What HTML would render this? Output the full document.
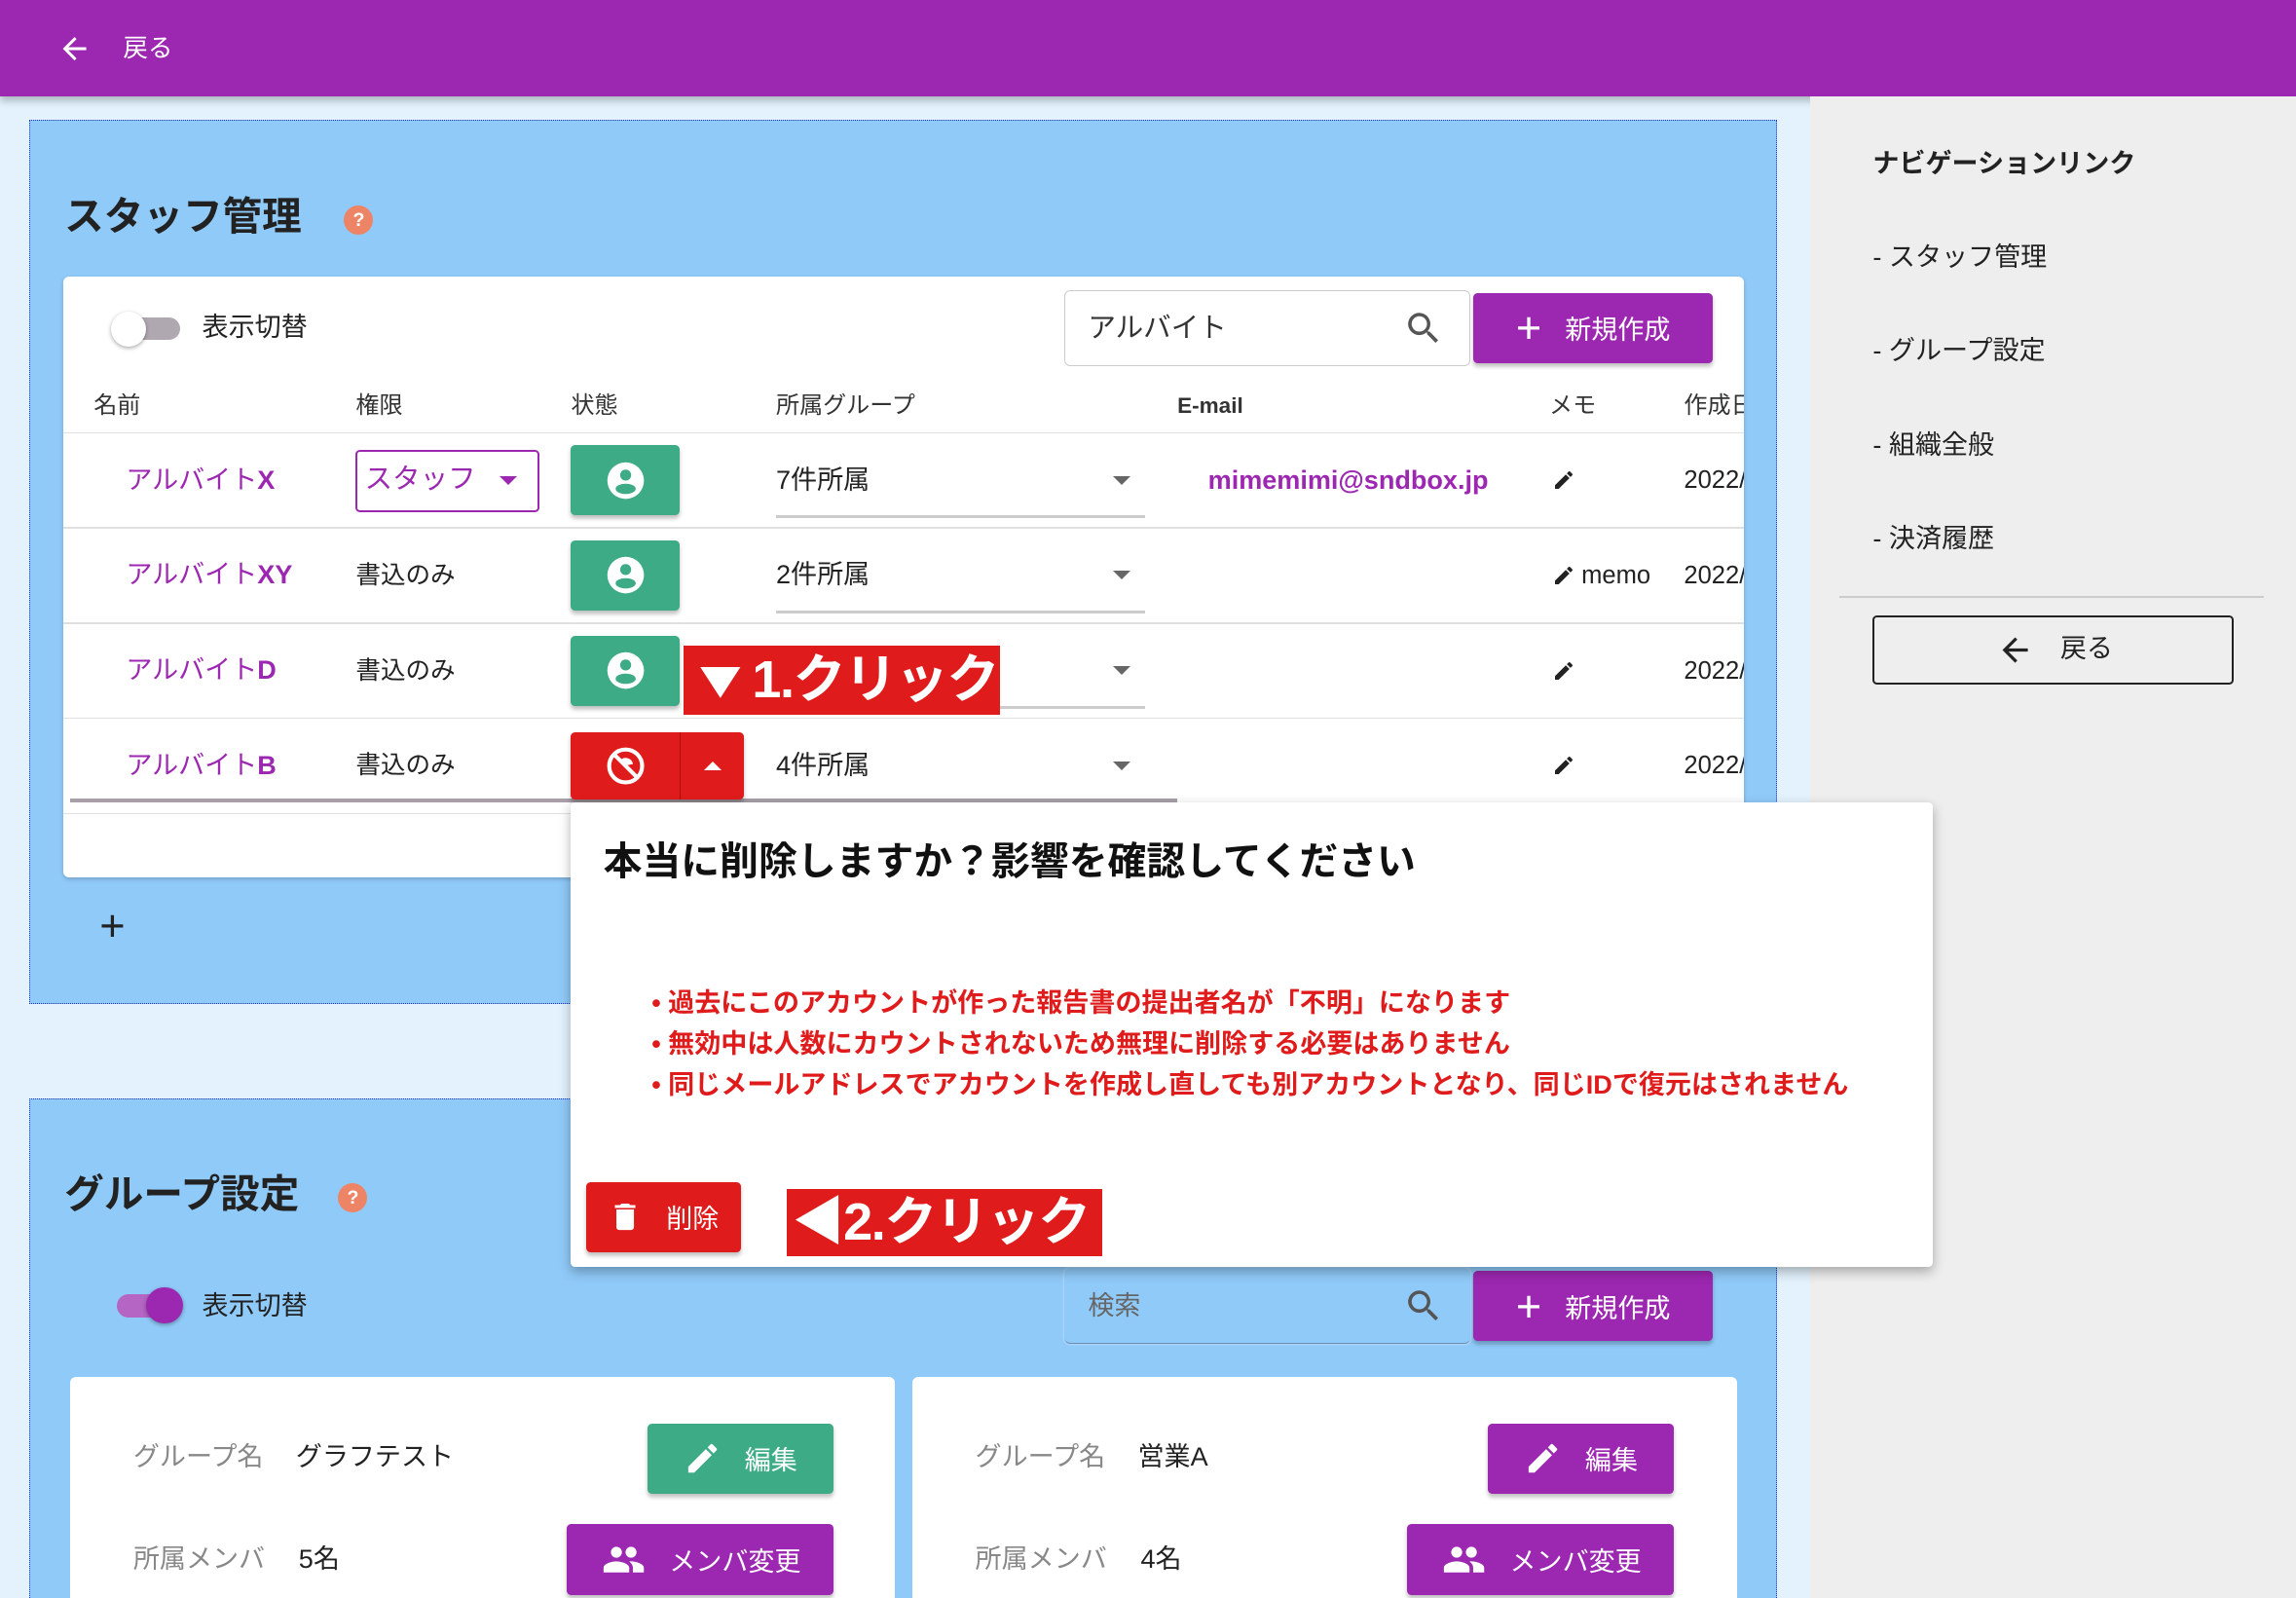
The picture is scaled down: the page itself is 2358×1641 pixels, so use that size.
<!DOCTYPE html>
<html><head><meta charset="utf-8">
<style>
html,body{margin:0;padding:0;width:2358px;height:1640px;overflow:hidden;background:#e3f2fd}
#w{position:absolute;left:0;top:0;width:1568px;height:1091px;zoom:1.50383;font-family:"Liberation Sans","Noto Sans CJK JP",sans-serif;color:#222;overflow:hidden}
.a{position:absolute}
.t{position:absolute;white-space:nowrap;line-height:1}
.btn{position:absolute;border-radius:3px;box-shadow:0 2px 3px rgba(0,0,0,.25);color:#fff;display:flex;align-items:center;justify-content:center}
.pur{background:#9c27b0}.grn{background:#3dab85}.red{background:#e01b1b}
.row{position:absolute;left:0;width:1148px;height:1px;background:#e0e0e0}
.name{color:#9c27b0;font-size:18px}
.name b{font-weight:bold}
.arrow{position:absolute;width:0;height:0;border-left:6px solid transparent;border-right:6px solid transparent;border-top:6px solid #666}
</style></head><body><div id="w">
<!-- header -->
<div class="a" style="left:0;top:0;width:1568px;height:66px;background:#9c27b0;box-shadow:0 3px 5px rgba(0,0,0,.25)"></div>
<svg class="a" style="left:38px;top:21px" width="26" height="24" viewBox="0 0 24 24"><path d="M20 11H7.8l5.6-5.6L12 4l-8 8 8 8 1.4-1.4L7.8 13H20z" fill="#fff"/></svg>
<div class="t" style="left:84px;top:25px;color:#fff;font-size:17px">戻る</div>
<!-- sidebar -->
<div class="a" style="left:1236px;top:66px;width:332px;height:1030px;background:#eeeeee"></div>
<div class="t" style="left:1279px;top:103px;font-size:18px;font-weight:bold">ナビゲーションリンク</div>
<div class="t" style="left:1279px;top:167px;font-size:18px">- スタッフ管理</div>
<div class="t" style="left:1279px;top:231px;font-size:18px">- グループ設定</div>
<div class="t" style="left:1279px;top:295px;font-size:18px">- 組織全般</div>
<div class="t" style="left:1279px;top:359px;font-size:18px">- 決済履歴</div>
<div class="a" style="left:1256px;top:407px;width:290px;height:1px;background:#ccc"></div>
<div class="a" style="left:1279px;top:420px;width:244px;height:45px;border:1.5px solid #222;border-radius:3px"></div>
<svg class="a" style="left:1363px;top:431px" width="26" height="26" viewBox="0 0 24 24"><path d="M20 11H7.8l5.6-5.6L12 4l-8 8 8 8 1.4-1.4L7.8 13H20z" fill="#222"/></svg>
<div class="t" style="left:1407px;top:434px;font-size:18px">戻る</div>

<!-- section 1 -->
<div class="a" style="left:20px;top:82px;width:1192px;height:602px;background:#90caf9;border:1px dotted #2233cc"></div>
<div class="t" style="left:44px;top:134px;font-size:27px;font-weight:bold">スタッフ管理</div>
<div class="a" style="left:235px;top:140px;width:20px;height:20px;border-radius:50%;background:#ee8466;color:#fff;font-size:13px;font-weight:bold;text-align:center;line-height:20px">?</div>
<div class="a" style="left:43px;top:189px;width:1148px;height:410px;background:#fff;border-radius:4px;box-shadow:0 1px 3px rgba(0,0,0,.2);overflow:hidden">
 <div class="a" style="left:40px;top:28px;width:40px;height:15px;border-radius:8px;background:#b0a8b0"></div>
 <div class="a" style="left:33px;top:24px;width:24px;height:24px;border-radius:50%;background:#fff;box-shadow:0 1px 3px rgba(0,0,0,.35)"></div>
 <div class="t" style="left:95px;top:26px;font-size:18px">表示切替</div>
 <div class="a" style="left:684px;top:9px;width:276px;height:51px;border:1px solid #ccc;border-radius:4px"></div>
 <div class="t" style="left:700px;top:26px;font-size:19px;color:#333">アルバイト</div>
 <svg class="a" style="left:915px;top:21px" width="28" height="28" viewBox="0 0 24 24"><path d="M15.5 14h-.8l-.3-.3A6.5 6.5 0 1 0 9.5 16a6.5 6.5 0 0 0 4.2-1.6l.3.3v.8l5 5 1.5-1.5-5-5zm-6 0a4.5 4.5 0 1 1 0-9 4.5 4.5 0 0 1 0 9z" fill="#555"/></svg>
 <div class="btn pur" style="left:963px;top:11px;width:164px;height:48px;font-size:18px"><span style="font-size:30px;font-weight:300;margin-right:16px;line-height:1">+</span>新規作成</div>
 <div class="t" style="left:21px;top:80px;font-size:16px;color:#333">名前</div>
 <div class="t" style="left:200px;top:80px;font-size:16px;color:#333">権限</div>
 <div class="t" style="left:347px;top:80px;font-size:16px;color:#333">状態</div>
 <div class="t" style="left:487px;top:80px;font-size:16px;color:#333">所属グループ</div>
 <div class="t" style="left:761px;top:81px;font-size:15px;color:#333;font-weight:bold">E-mail</div>
 <div class="t" style="left:1015px;top:80px;font-size:16px;color:#333">メモ</div>
 <div class="t" style="left:1107px;top:80px;font-size:16px;color:#333">作成日</div>
 <div class="row" style="top:106px"></div>
 <div class="row" style="top:171px"></div>
 <div class="row" style="top:236px"></div>
 <div class="row" style="top:301px"></div>
 <div class="row" style="top:366px"></div>
 <div class="t name" style="left:43px;top:130px">アルバイト<b>X</b></div>
 <div class="a" style="left:200px;top:118px;width:123px;height:40px;border:1.5px solid #9c27b0;border-radius:3px"></div>
 <div class="t" style="left:206px;top:129px;font-size:19px;color:#9c27b0">スタッフ</div>
 <div class="arrow" style="left:298px;top:136px;border-top-color:#9c27b0"></div>
 <div class="t" style="left:487px;top:130px;font-size:18px">7件所属</div>
 <div class="arrow" style="left:717px;top:136px"></div>
 <div class="a" style="left:487px;top:163px;width:252px;height:2px;background:#ccc"></div>
 <div class="t" style="left:782px;top:130px;font-size:18px;color:#9c27b0;font-weight:bold">mimemimi@sndbox.jp</div>
 <div class="t" style="left:1107px;top:131px;font-size:17px">2022/</div>
 <div class="t name" style="left:43px;top:195px">アルバイト<b>XY</b></div>
 <div class="t" style="left:200px;top:196px;font-size:17px">書込のみ</div>
 <div class="t" style="left:487px;top:195px;font-size:18px">2件所属</div>
 <div class="arrow" style="left:717px;top:201px"></div>
 <div class="a" style="left:487px;top:228px;width:252px;height:2px;background:#ccc"></div>
 <div class="t" style="left:1037px;top:196px;font-size:17px">memo</div>
 <div class="t" style="left:1107px;top:196px;font-size:17px">2022/</div>
 <div class="t name" style="left:43px;top:260px">アルバイト<b>D</b></div>
 <div class="t" style="left:200px;top:261px;font-size:17px">書込のみ</div>
 <div class="arrow" style="left:717px;top:266px"></div>
 <div class="a" style="left:487px;top:293px;width:252px;height:2px;background:#ccc"></div>
 <div class="t" style="left:1107px;top:261px;font-size:17px">2022/</div>
 <div class="t name" style="left:43px;top:325px">アルバイト<b>B</b></div>
 <div class="t" style="left:200px;top:326px;font-size:17px">書込のみ</div>
 <div class="t" style="left:487px;top:325px;font-size:18px">4件所属</div>
 <div class="arrow" style="left:717px;top:331px"></div>
 <div class="t" style="left:1107px;top:326px;font-size:17px">2022/</div>
 <div class="a" style="left:5px;top:356px;width:756px;height:3px;background:#a89fa8"></div>
 <svg class="a" style="left:1017px;top:131px" width="16" height="16" viewBox="0 0 24 24"><path d="M3 17.25V21h3.75L17.8 9.940l-3.75-3.75zM20.7 7.04a1 1 0 0 0 0-1.41l-2.34-2.34a1 1 0 0 0-1.41 0l-1.83 1.83 3.75 3.75z" fill="#222"/></svg>
 <svg class="a" style="left:1017px;top:196px" width="16" height="16" viewBox="0 0 24 24"><path d="M3 17.25V21h3.75L17.8 9.94l-3.75-3.75zM20.7 7.04a1 1 0 0 0 0-1.41l-2.34-2.34a1 1 0 0 0-1.41 0l-1.83 1.83 3.75 3.75z" fill="#222"/></svg>
 <svg class="a" style="left:1017px;top:261px" width="16" height="16" viewBox="0 0 24 24"><path d="M3 17.25V21h3.75L17.8 9.94l-3.75-3.75zM20.7 7.04a1 1 0 0 0 0-1.41l-2.34-2.34a1 1 0 0 0-1.41 0l-1.83 1.83 3.75 3.75z" fill="#222"/></svg>
 <svg class="a" style="left:1017px;top:326px" width="16" height="16" viewBox="0 0 24 24"><path d="M3 17.25V21h3.75L17.8 9.94l-3.75-3.75zM20.7 7.04a1 1 0 0 0 0-1.41l-2.34-2.34a1 1 0 0 0-1.41 0l-1.83 1.83 3.75 3.75z" fill="#222"/></svg>
</div>
<div class="btn grn" style="left:390px;top:304px;width:74px;height:48px"><svg width="30" height="30" viewBox="0 0 24 24"><circle cx="12" cy="12" r="10" fill="#fff"/><circle cx="12" cy="9" r="3" fill="#3dab85"/><ellipse cx="12" cy="16.5" rx="5.5" ry="2.8" fill="#3dab85"/></svg></div>
<div class="btn grn" style="left:390px;top:369px;width:74px;height:48px"><svg width="30" height="30" viewBox="0 0 24 24"><circle cx="12" cy="12" r="10" fill="#fff"/><circle cx="12" cy="9" r="3" fill="#3dab85"/><ellipse cx="12" cy="16.5" rx="5.5" ry="2.8" fill="#3dab85"/></svg></div>
<div class="btn grn" style="left:390px;top:434px;width:74px;height:48px"><svg width="30" height="30" viewBox="0 0 24 24"><circle cx="12" cy="12" r="10" fill="#fff"/><circle cx="12" cy="9" r="3" fill="#3dab85"/><ellipse cx="12" cy="16.5" rx="5.5" ry="2.8" fill="#3dab85"/></svg></div>
<div class="btn red" style="left:390px;top:500px;width:118px;height:46px;justify-content:flex-start">
 <div style="width:74px;display:flex;justify-content:center"><svg width="30" height="30" viewBox="0 0 24 24"><circle cx="12" cy="12" r="9" fill="none" stroke="#fff" stroke-width="2.2"/><path d="M9 9a4 4 0 0 1 7 2l-5 1z" fill="#fff"/><path d="M6 6l12 12" stroke="#fff" stroke-width="2.2"/></svg></div>
 <div style="width:1px;height:46px;background:#b01010"></div>
 <div style="flex:1;display:flex;justify-content:center"><div style="width:0;height:0;border-left:6px solid transparent;border-right:6px solid transparent;border-bottom:6px solid #fff"></div></div>
</div>
<div class="a" style="left:467px;top:441px;width:216px;height:47px;background:#e01b1b;color:#fff;font-size:36px;font-weight:bold;line-height:47px;white-space:nowrap;overflow:hidden;letter-spacing:-1px"><span style="display:inline-block;transform:scaleX(1.3);transform-origin:left;margin-left:2px">▼</span><span style="margin-left:10px">1.クリック</span></div>
<div class="t" style="left:68px;top:617px;font-size:30px;font-weight:300">+</div>

<!-- section 2 -->
<div class="a" style="left:20px;top:750px;width:1192px;height:360px;background:#90caf9;border:1px dotted #2233cc"></div>
<div class="t" style="left:44px;top:802px;font-size:27px;font-weight:bold">グループ設定</div>
<div class="a" style="left:231px;top:808px;width:20px;height:20px;border-radius:50%;background:#ee8466;color:#fff;font-size:13px;font-weight:bold;text-align:center;line-height:20px">?</div>
<div class="a" style="left:80px;top:884px;width:40px;height:16px;border-radius:8px;background:#b565c4"></div>
<div class="a" style="left:100px;top:879px;width:25px;height:25px;border-radius:50%;background:#9c27b0;box-shadow:0 1px 3px rgba(0,0,0,.35)"></div>
<div class="t" style="left:138px;top:883px;font-size:18px">表示切替</div>
<div class="a" style="left:727px;top:866px;width:277px;height:51px;border-bottom:1px solid #6a8fb0;border-radius:4px;background:#90caf9;box-shadow:0 0 0 1px #a7d4f8"></div>
<div class="t" style="left:743px;top:883px;font-size:18px;color:#666">検索</div>
<svg class="a" style="left:958px;top:878px" width="28" height="28" viewBox="0 0 24 24"><path d="M15.5 14h-.8l-.3-.3A6.5 6.5 0 1 0 9.5 16a6.5 6.5 0 0 0 4.2-1.6l.3.3v.8l5 5 1.5-1.5-5-5zm-6 0a4.5 4.5 0 1 1 0-9 4.5 4.5 0 0 1 0 9z" fill="#555"/></svg>
<div class="btn pur" style="left:1006px;top:868px;width:164px;height:48px;font-size:18px"><span style="font-size:30px;font-weight:300;margin-right:16px;line-height:1">+</span>新規作成</div>
<div class="a" style="left:48px;top:940px;width:563px;height:200px;background:#fff;border-radius:4px"></div>
<div class="a" style="left:623px;top:940px;width:563px;height:200px;background:#fff;border-radius:4px"></div>
<div class="t" style="left:91px;top:986px;font-size:18px;color:#888">グループ名</div>
<div class="t" style="left:202px;top:986px;font-size:18px">グラフテスト</div>
<div class="t" style="left:91px;top:1056px;font-size:18px;color:#888">所属メンバ</div>
<div class="t" style="left:204px;top:1056px;font-size:18px">5名</div>
<div class="t" style="left:666px;top:986px;font-size:18px;color:#888">グループ名</div>
<div class="t" style="left:777px;top:986px;font-size:18px">営業A</div>
<div class="t" style="left:666px;top:1056px;font-size:18px;color:#888">所属メンバ</div>
<div class="t" style="left:779px;top:1056px;font-size:18px">4名</div>
<div class="btn grn" style="left:442px;top:972px;width:127px;height:48px;font-size:18px"><svg width="26" height="26" viewBox="0 0 24 24" style="margin-right:16px"><path d="M3 17.25V21h3.75L17.8 9.94l-3.75-3.75zM20.7 7.04a1 1 0 0 0 0-1.41l-2.34-2.34a1 1 0 0 0-1.41 0l-1.83 1.83 3.75 3.75z" fill="#fff"/></svg>編集</div>
<div class="btn pur" style="left:1016px;top:972px;width:127px;height:48px;font-size:18px"><svg width="26" height="26" viewBox="0 0 24 24" style="margin-right:16px"><path d="M3 17.25V21h3.75L17.8 9.94l-3.75-3.75zM20.7 7.04a1 1 0 0 0 0-1.41l-2.34-2.34a1 1 0 0 0-1.41 0l-1.83 1.83 3.75 3.75z" fill="#fff"/></svg>編集</div>
<div class="btn pur" style="left:387px;top:1041px;width:182px;height:48px;font-size:18px"><svg width="34" height="30" viewBox="0 0 24 24" style="margin-right:14px"><path d="M16 11a3 3 0 1 0 0-6 3 3 0 0 0 0 6zm-8 0a3 3 0 1 0 0-6 3 3 0 0 0 0 6zm0 2c-2.3 0-7 1.2-7 3.5V19h14v-2.5C15 14.2 10.3 13 8 13zm8 0c-.3 0-.6 0-1 .1 1.2.8 2 2 2 3.4V19h6v-2.5c0-2.3-4.7-3.5-7-3.5z" fill="#fff"/></svg>メンバ変更</div>
<div class="btn pur" style="left:961px;top:1041px;width:182px;height:48px;font-size:18px"><svg width="34" height="30" viewBox="0 0 24 24" style="margin-right:14px"><path d="M16 11a3 3 0 1 0 0-6 3 3 0 0 0 0 6zm-8 0a3 3 0 1 0 0-6 3 3 0 0 0 0 6zm0 2c-2.3 0-7 1.2-7 3.5V19h14v-2.5C15 14.2 10.3 13 8 13zm8 0c-.3 0-.6 0-1 .1 1.2.8 2 2 2 3.4V19h6v-2.5c0-2.3-4.7-3.5-7-3.5z" fill="#fff"/></svg>メンバ変更</div>

<!-- popup -->
<div class="a" style="left:390px;top:548px;width:930px;height:317px;background:#fff;border-radius:3px;box-shadow:0 3px 8px rgba(0,0,0,.3)"></div>
<div class="t" style="left:412px;top:576px;font-size:26.5px;font-weight:bold;color:#111">本当に削除しますか？影響を確認してください</div>
<div class="t" style="left:445px;top:676px;font-size:18px;font-weight:bold;color:#e01b1b">•&nbsp;過去にこのアカウントが作った報告書の提出者名が「不明」になります</div>
<div class="t" style="left:445px;top:704px;font-size:18px;font-weight:bold;color:#e01b1b">•&nbsp;無効中は人数にカウントされないため無理に削除する必要はありません</div>
<div class="t" style="left:445px;top:732px;font-size:18px;font-weight:bold;color:#e01b1b">•&nbsp;同じメールアドレスでアカウントを作成し直しても別アカウントとなり、同じIDで復元はされません</div>
<div class="btn red" style="left:400px;top:807px;width:106px;height:48px;font-size:18px"><svg width="24" height="26" viewBox="0 0 24 24" style="margin-right:16px"><path d="M6 19a2 2 0 0 0 2 2h8a2 2 0 0 0 2-2V7H6zM19 4h-3.5l-1-1h-5l-1 1H5v2h14z" fill="#fff"/></svg>削除</div>
<div class="a" style="left:537px;top:812px;width:216px;height:46px;background:#e01b1b;color:#fff;font-size:36px;font-weight:bold;line-height:46px;white-space:nowrap;overflow:hidden;letter-spacing:-1px;text-indent:4px">◀2.クリック</div>
</div></body></html>
